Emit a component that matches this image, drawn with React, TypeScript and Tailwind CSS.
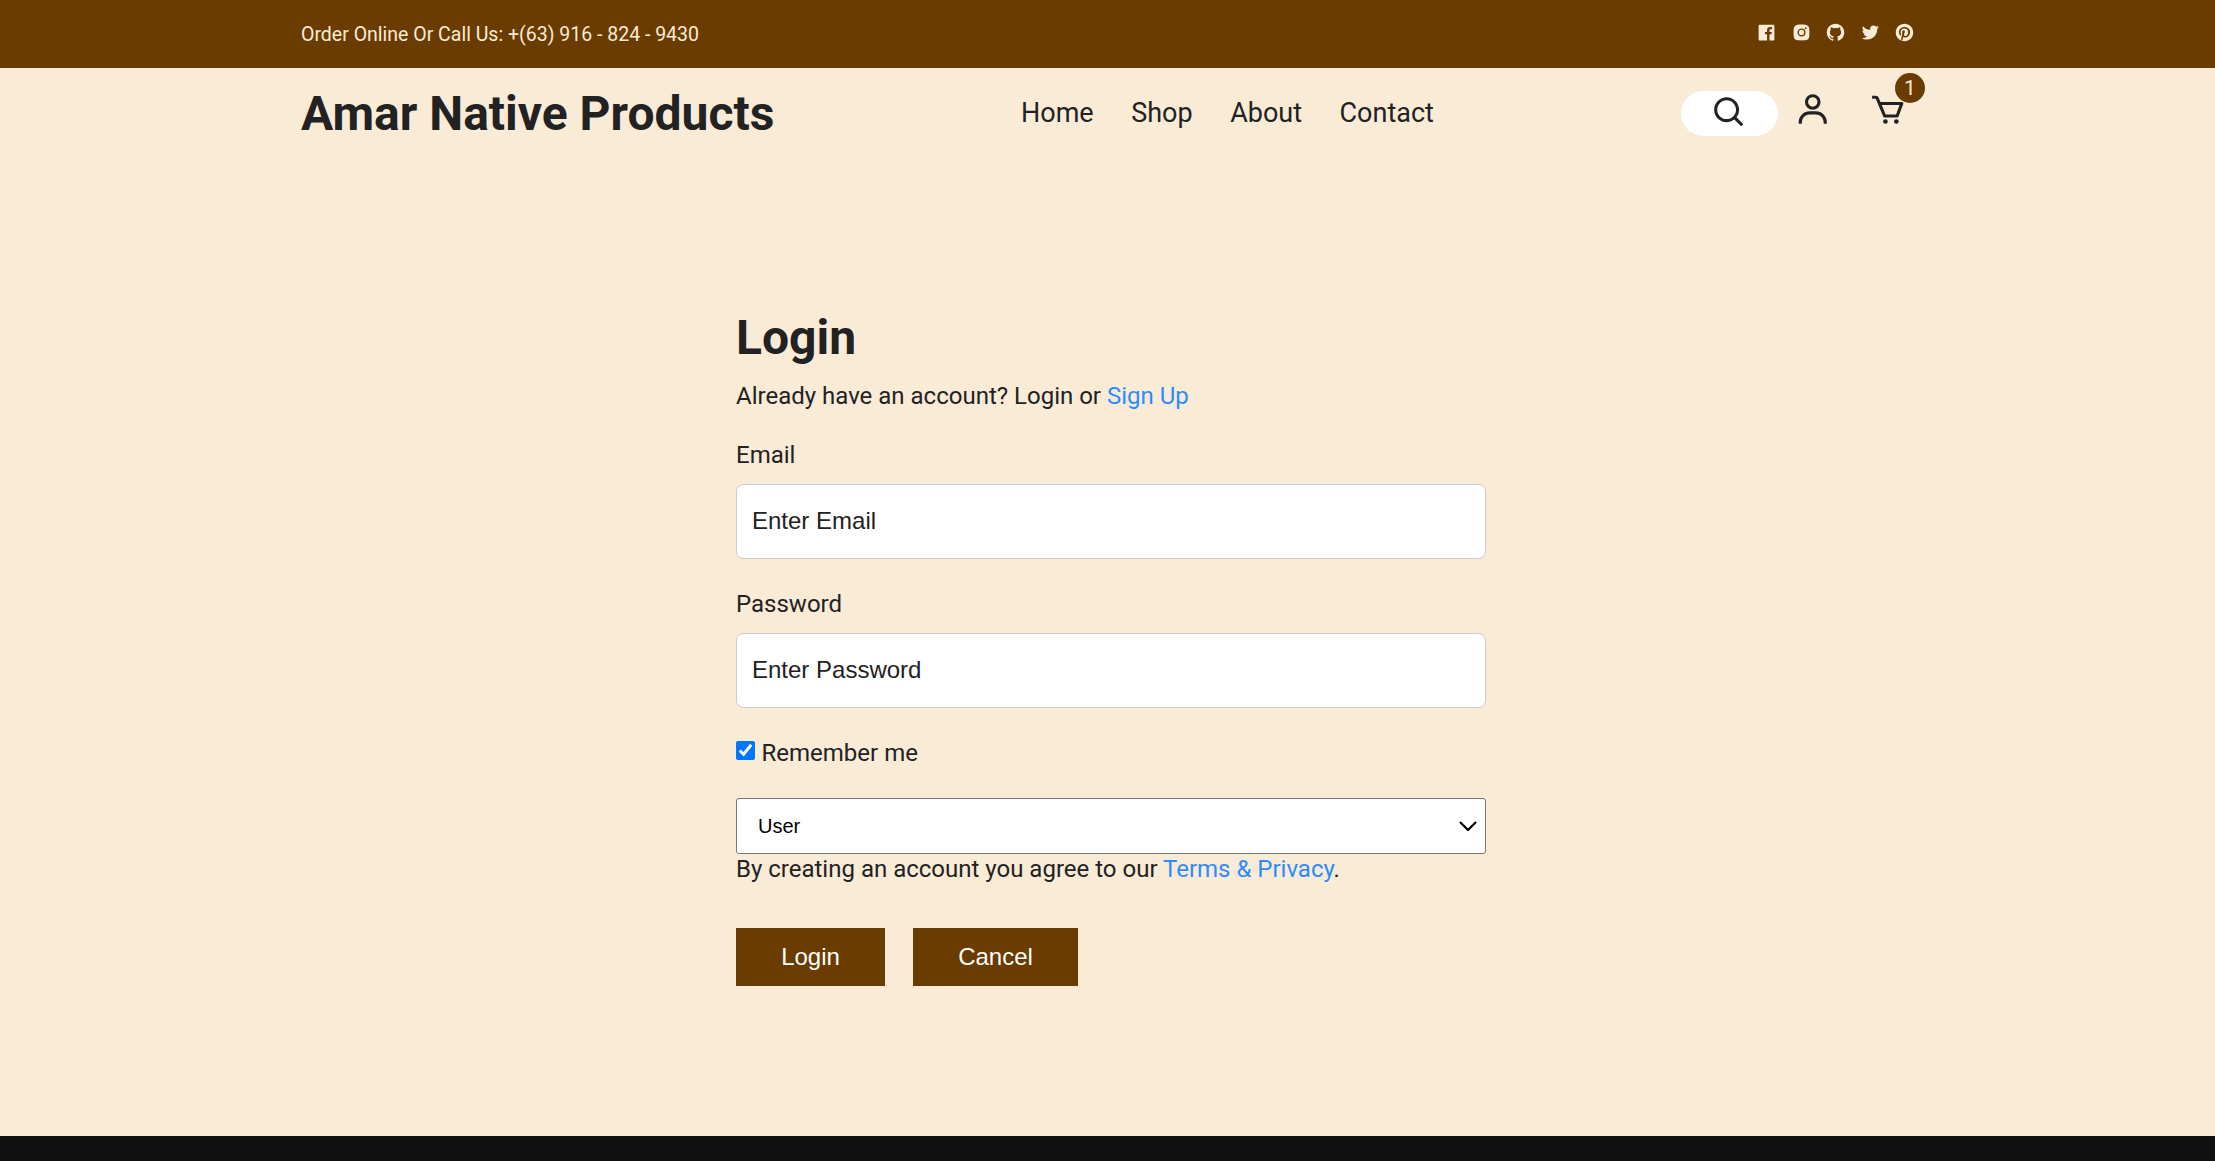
import { useState } from "react";
import {
  BiCart,
  BiLogoFacebookSquare,
  BiLogoGithub,
  BiLogoInstagramAlt,
  BiLogoPinterest,
  BiLogoTwitter,
  BiSearch,
  BiUser,
} from "react-icons/bi";

const socials = [BiLogoFacebookSquare, BiLogoInstagramAlt, BiLogoGithub, BiLogoTwitter, BiLogoPinterest];
const links = ["Home", "Shop", "About", "Contact"];

function TopBar() {
  return (
    <div className="h-[68px] bg-[#6b3c00] text-[#faebd7]">
      <div className="mx-auto flex h-full w-[1613px] items-center justify-between">
        <p className="pt-[2px] text-[19.5px]">Order Online Or Call Us: +(63) 916 - 824 - 9430</p>
        <ul className="-mr-px mb-1 flex gap-[13.4px]">
          {socials.map((Icon, i) => (
            <li key={i}>
              <Icon className="size-[21px]" />
            </li>
          ))}
        </ul>
      </div>
    </div>
  );
}

function NavBar() {
  return (
    <nav className="mx-auto flex h-[90px] w-[1613px] items-center">
      <h1 className="w-[720px] pt-[2px] text-[48px] leading-none font-bold">Amar Native Products</h1>
      <ul className="flex flex-1 gap-[37.5px] text-[27px]">
        {links.map((l) => (
          <li key={l}>{l}</li>
        ))}
      </ul>
      <div className="mr-[7.5px] flex items-center">
        <div className="flex h-[45px] w-[97px] justify-center rounded-full bg-white pt-[3px]">
          <BiSearch className="size-[37.5px]" />
        </div>
        <BiUser className="mb-[7px] ml-4 size-[37.5px]" />
        <div className="relative mb-[7px] ml-[37.5px]">
          <BiCart className="size-[37.5px]" />
          <span className="absolute -top-[17.5px] left-[26px] flex size-[30px] items-center justify-center rounded-full bg-[#6b3c00] text-[21px] leading-none text-[#faebd7]">
            1
          </span>
        </div>
      </div>
    </nav>
  );
}

const field =
  "mt-[11px] mb-[27px] block h-[75px] w-full rounded-[7.5px] border border-[#ccc] bg-white px-[15px] pb-[2px] font-['Liberation_Sans',sans-serif] text-[24px] text-[#222] outline-none placeholder:text-[#222]";
const button = "h-[58px] bg-[#6b3c00] font-['Liberation_Sans',sans-serif] text-[24px] text-white";

function LoginForm() {
  const [remember, setRemember] = useState(true);
  return (
    <form className="ml-[736px] w-[750px] pt-[150px] text-[24px] leading-[36px]" onSubmit={(e) => e.preventDefault()}>
      <h2 className="text-[48px] leading-[60px] font-bold">Login</h2>
      <p className="mt-[10px] mb-[23px]">
        Already have an account? Login or <a className="text-[#2a8cff]">Sign Up</a>
      </p>
      <label htmlFor="email" className="block leading-[36px]">Email</label>
      <input id="email" type="text" placeholder="Enter Email" className={field} />
      <label htmlFor="password" className="block leading-[36px]">Password</label>
      <input id="password" type="password" placeholder="Enter Password" className={field} />
      <label className="flex h-[36px]">
        <input
          type="checkbox"
          checked={remember}
          onChange={(e) => setRemember(e.target.checked)}
          className="mt-[6px] mr-[6.5px] size-[19px]"
        />
        Remember me
      </label>
      <div className="relative mt-[27px]">
        <select className="block h-[56px] w-full appearance-none rounded-[3px] border border-[#767676] bg-white pl-[21px] font-['Liberation_Sans',sans-serif] text-[20px] text-black">
          <option>User</option>
          <option>Admin</option>
        </select>
        <svg viewBox="0 0 18 10" fill="none" stroke="#000" strokeWidth="2.2" className="pointer-events-none absolute top-[23px] right-[9px] h-[10px] w-[18px]">
          <path d="M1 1l8 8 8-8" />
        </svg>
      </div>
      <p className="mt-[-3px]">
        By creating an account you agree to our <a className="text-[#2a8cff]">Terms &amp; Privacy</a>.
      </p>
      <div className="mt-[41px] flex gap-[28px]">
        <button type="button" className={`w-[149px] ${button}`}>Login</button>
        <button type="submit" className={`w-[165px] ${button}`}>Cancel</button>
      </div>
    </form>
  );
}

export default function App() {
  return (
    <div className="flex h-[1161px] flex-col overflow-hidden bg-[#faebd7] font-[Roboto,sans-serif] text-[#222]">
      <TopBar />
      <NavBar />
      <main className="flex-1">
        <LoginForm />
      </main>
      <footer className="h-[25px] bg-[#111]" />
    </div>
  );
}
